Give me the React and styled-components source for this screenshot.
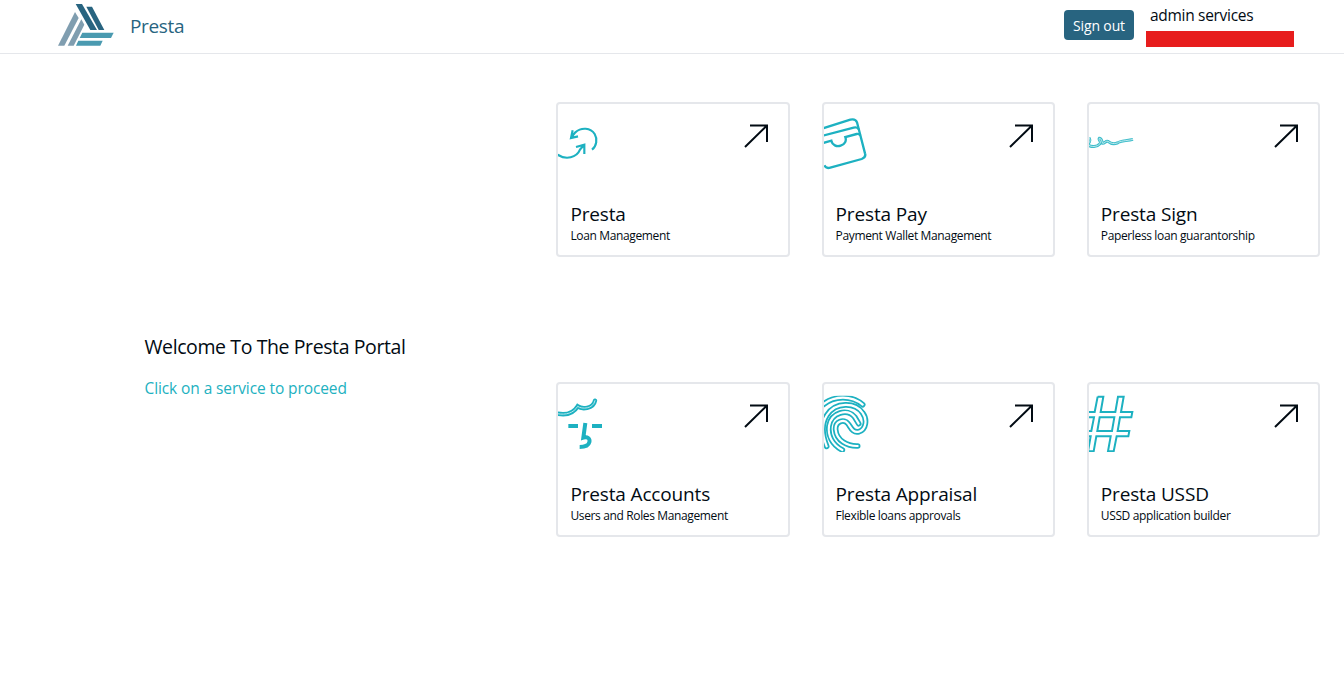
import styled, { createGlobalStyle } from "styled-components";

const services = [
  { name: "Presta", text: "Loan Management", icon: LoanIcon },
  { name: "Presta Pay", text: "Payment Wallet Management", icon: WalletIcon },
  { name: "Presta Sign", text: "Paperless loan guarantorship", icon: SignIcon },
  { name: "Presta Accounts", text: "Users and Roles Management", icon: UserIcon },
  { name: "Presta Appraisal", text: "Flexible loans approvals", icon: FingerprintIcon },
  { name: "Presta USSD", text: "USSD application builder", icon: HashIcon },
];

export default function App() {
  return (
    <>
      <GlobalStyle />
      <Header>
        <Brand>
          <Logo />
          <BrandName>Presta</BrandName>
        </Brand>
        <Account>
          <SignOut>Sign out</SignOut>
          <User>
            <UserName>admin services</UserName>
            <UserEmail />
          </User>
        </Account>
      </Header>
      <Main>
        <Welcome>
          <h1>Welcome To The Presta Portal</h1>
          <p>Click on a service to proceed</p>
        </Welcome>
        <Services>
          {services.map((service) => (
            <ServiceCard key={service.name} service={service} />
          ))}
        </Services>
      </Main>
    </>
  );
}

function ServiceCard({ service }) {
  const Icon = service.icon;
  return (
    <Card>
      <CardTop>
        <Icon />
        <Arrow viewBox="0 0 24 24">
          <path d="M1 23 23 1.5M6 1.5H24M23 1.5V18" />
        </Arrow>
      </CardTop>
      <CardName>{service.name}</CardName>
      <CardText>{service.text}</CardText>
    </Card>
  );
}

function Logo() {
  return (
    <LogoSvg viewBox="24 12 168 126">
      <g fill="#286480">
        <path d="M77 12H96L141 90H121Z" />
        <path d="M109 20H126L163 90H146Z" />
      </g>
      <g fill="#809eb0">
        <path d="M75 36 86 54 43 137H24Z" />
        <path d="M94 58 103 74 71 137H53Z" />
      </g>
      <g fill="#4a9ab0">
        <path d="M97 98H191L183 114H89Z" />
        <path d="M85 122H158L151 137H78Z" />
      </g>
    </LogoSvg>
  );
}

function LoanIcon() {
  return (
    <Icon viewBox="24 27 144 204" $line={6.5}>
      <path d="M126 164C140 153 143 132 134 117C122 98 94 96 76 112L64 127M68 106 63 129 84 124" />
      <path d="M23 179C48 196 80 188 90 164L102 150M78 156 103 149V177" />
    </Icon>
  );
}

function WalletIcon() {
  return (
    <Icon viewBox="27 27 144 204" $line={7}>
      <path d="M24 100 106 74Q121 70 126 82L150 175Q154 187 140 192L46 218Q33 222 28 211" />
      <path d="M24 122 116 98Q127 95 131 103" />
      <path d="M24 144 49 137C52 151 65 156 77 152C90 148 95 137 91 126L125 117Q132 115 136 122" />
    </Icon>
  );
}

function SignIcon() {
  const line =
    "M27 128C34 140 26 144 22 148C34 158 51 156 60 146C65 139 54 134 58 130C65 130 65 139 68 145C74 146 77 136 84 139C91 145 101 148 112 144C120 137 139 138 159 133";
  return (
    <Icon viewBox="27 27 144 204">
      <path d={line} strokeWidth="9" opacity="0.85" />
      <path d={line} stroke="#d4f2f5" strokeWidth="2.5" />
    </Icon>
  );
}

function UserIcon() {
  const hair = "M22 116C48 121 71 114 83 94C95 103 130 103 135 77";
  return (
    <Icon viewBox="24 27 144 204">
      <path d={hair} strokeWidth="13" strokeLinecap="round" />
      <path d={hair} stroke="#b4e6eb" strokeWidth="3" strokeLinecap="round" />
      <path d="M55 153H84M126 153H156" strokeWidth="12" />
      <path d="M106 144 100 188C112 184 121 190 118 202C115 214 102 216 89 216" strokeWidth="12" />
    </Icon>
  );
}

function FingerprintIcon() {
  const ridges = [
    "M20 92C58 59 111 62 143 89",
    "M35 214C23 184 16 151 36 120C62 80 121 81 143 114C157 133 154 162 132 170C113 175 107 156 99 146C87 130 60 139 62 164C65 198 98 214 128 213",
    "M82 225C51 209 38 181 42 153C49 111 98 100 119 126L131 146",
  ];
  return (
    <Icon viewBox="27 27 144 204">
      <svg x="27" y="62" width="144" height="169" viewBox="27 62 144 169">
        {ridges.map((d) => (
          <g key={d} strokeLinecap="round">
            <path d={d} strokeWidth="17" />
            <path d={d} stroke="#fff" strokeWidth="6.5" />
          </g>
        ))}
      </svg>
    </Icon>
  );
}

function HashIcon() {
  return (
    <Icon viewBox="27 27 144 204" $line={6}>
      <path d="M53 65H70L62 111H106L114 65H131L123 111H157L154 127H120L113 168H148L145 184H110L101 229H84L92 184H49L41 229H24M53 65 44 111H20M20 127H42L34 168H20M59 127H103L96 168H52ZM20 184H32L24 229" />
    </Icon>
  );
}

const GlobalStyle = createGlobalStyle`
  * {
    box-sizing: border-box;
  }
  body {
    margin: 0;
    overflow: hidden;
    background: #fff;
    color: #020b13;
    font-family: "Open Sans", "Noto Sans", sans-serif;
  }
  h1, h2, p {
    margin: 0;
    font-weight: 400;
    white-space: nowrap;
  }
`;
const Header = styled.header`
  display: flex;
  justify-content: space-between;
  height: 54px;
  padding: 0 50px 0 58px;
  border-bottom: 1px solid #e5e7eb;
`;
const Brand = styled.div`
  display: flex;
  align-items: center;
  gap: 16px;
  padding-bottom: 3px;
`;
const LogoSvg = styled.svg`
  width: 56px;
  height: 42px;
`;
const BrandName = styled.span`
  padding-top: 2px;
  font-size: 19px;
  letter-spacing: -0.35px;
  color: #286480;
`;
const Account = styled.div`
  display: flex;
  gap: 12px;
`;
const SignOut = styled.button`
  width: 70px;
  height: 30px;
  margin-top: 10px;
  padding: 0;
  border: 0;
  border-radius: 4px;
  background: #286480;
  color: #fff;
  font-family: inherit;
  font-size: 14px;
  letter-spacing: -0.15px;
`;
const User = styled.div`
  display: flex;
  flex-direction: column;
  width: 148px;
  padding-top: 4px;
`;
const UserName = styled.span`
  height: 27px;
  padding-left: 4px;
  font-size: 15.5px;
  line-height: 23px;
  letter-spacing: -0.3px;
`;
const UserEmail = styled.span`
  height: 16px;
  background: #e71d1d;
`;
const Main = styled.main`
  display: grid;
  grid-template-columns: 411.9px 763.6px;
  padding: 48px 24px 0 144.5px;
`;
const Welcome = styled.section`
  padding-top: 229px;
  h1 {
    font-size: 19.5px;
    line-height: 32px;
    letter-spacing: -0.4px;
  }
  p {
    margin-top: 13px;
    font-size: 15.5px;
    line-height: 24px;
    letter-spacing: -0.1px;
    color: #22b1bf;
  }
`;
const Services = styled.section`
  display: grid;
  grid-template-columns: repeat(3, 1fr);
  column-gap: 32px;
  row-gap: 125px;
`;
const Card = styled.article`
  height: 155px;
  border: 2px solid #e5e7eb;
  border-radius: 4px;
  overflow: hidden;
`;
const CardTop = styled.div`
  display: flex;
  align-items: flex-start;
  justify-content: space-between;
  height: 96px;
  padding-right: 20px;
`;
const Icon = styled.svg`
  width: 48px;
  height: 68px;
  fill: none;
  stroke: #1db1c1;
  stroke-width: ${({ $line }) => $line || 7};
`;
const Arrow = styled.svg`
  width: 24px;
  height: 24px;
  margin-top: 20px;
  fill: none;
  stroke: #020b13;
  stroke-width: 2;
`;
const CardName = styled.h2`
  padding-left: 12px;
  font-size: 19px;
  line-height: 28px;
  letter-spacing: -0.15px;
`;
const CardText = styled.p`
  padding-left: 12px;
  font-size: 12px;
  line-height: 16px;
  letter-spacing: -0.36px;
`;
